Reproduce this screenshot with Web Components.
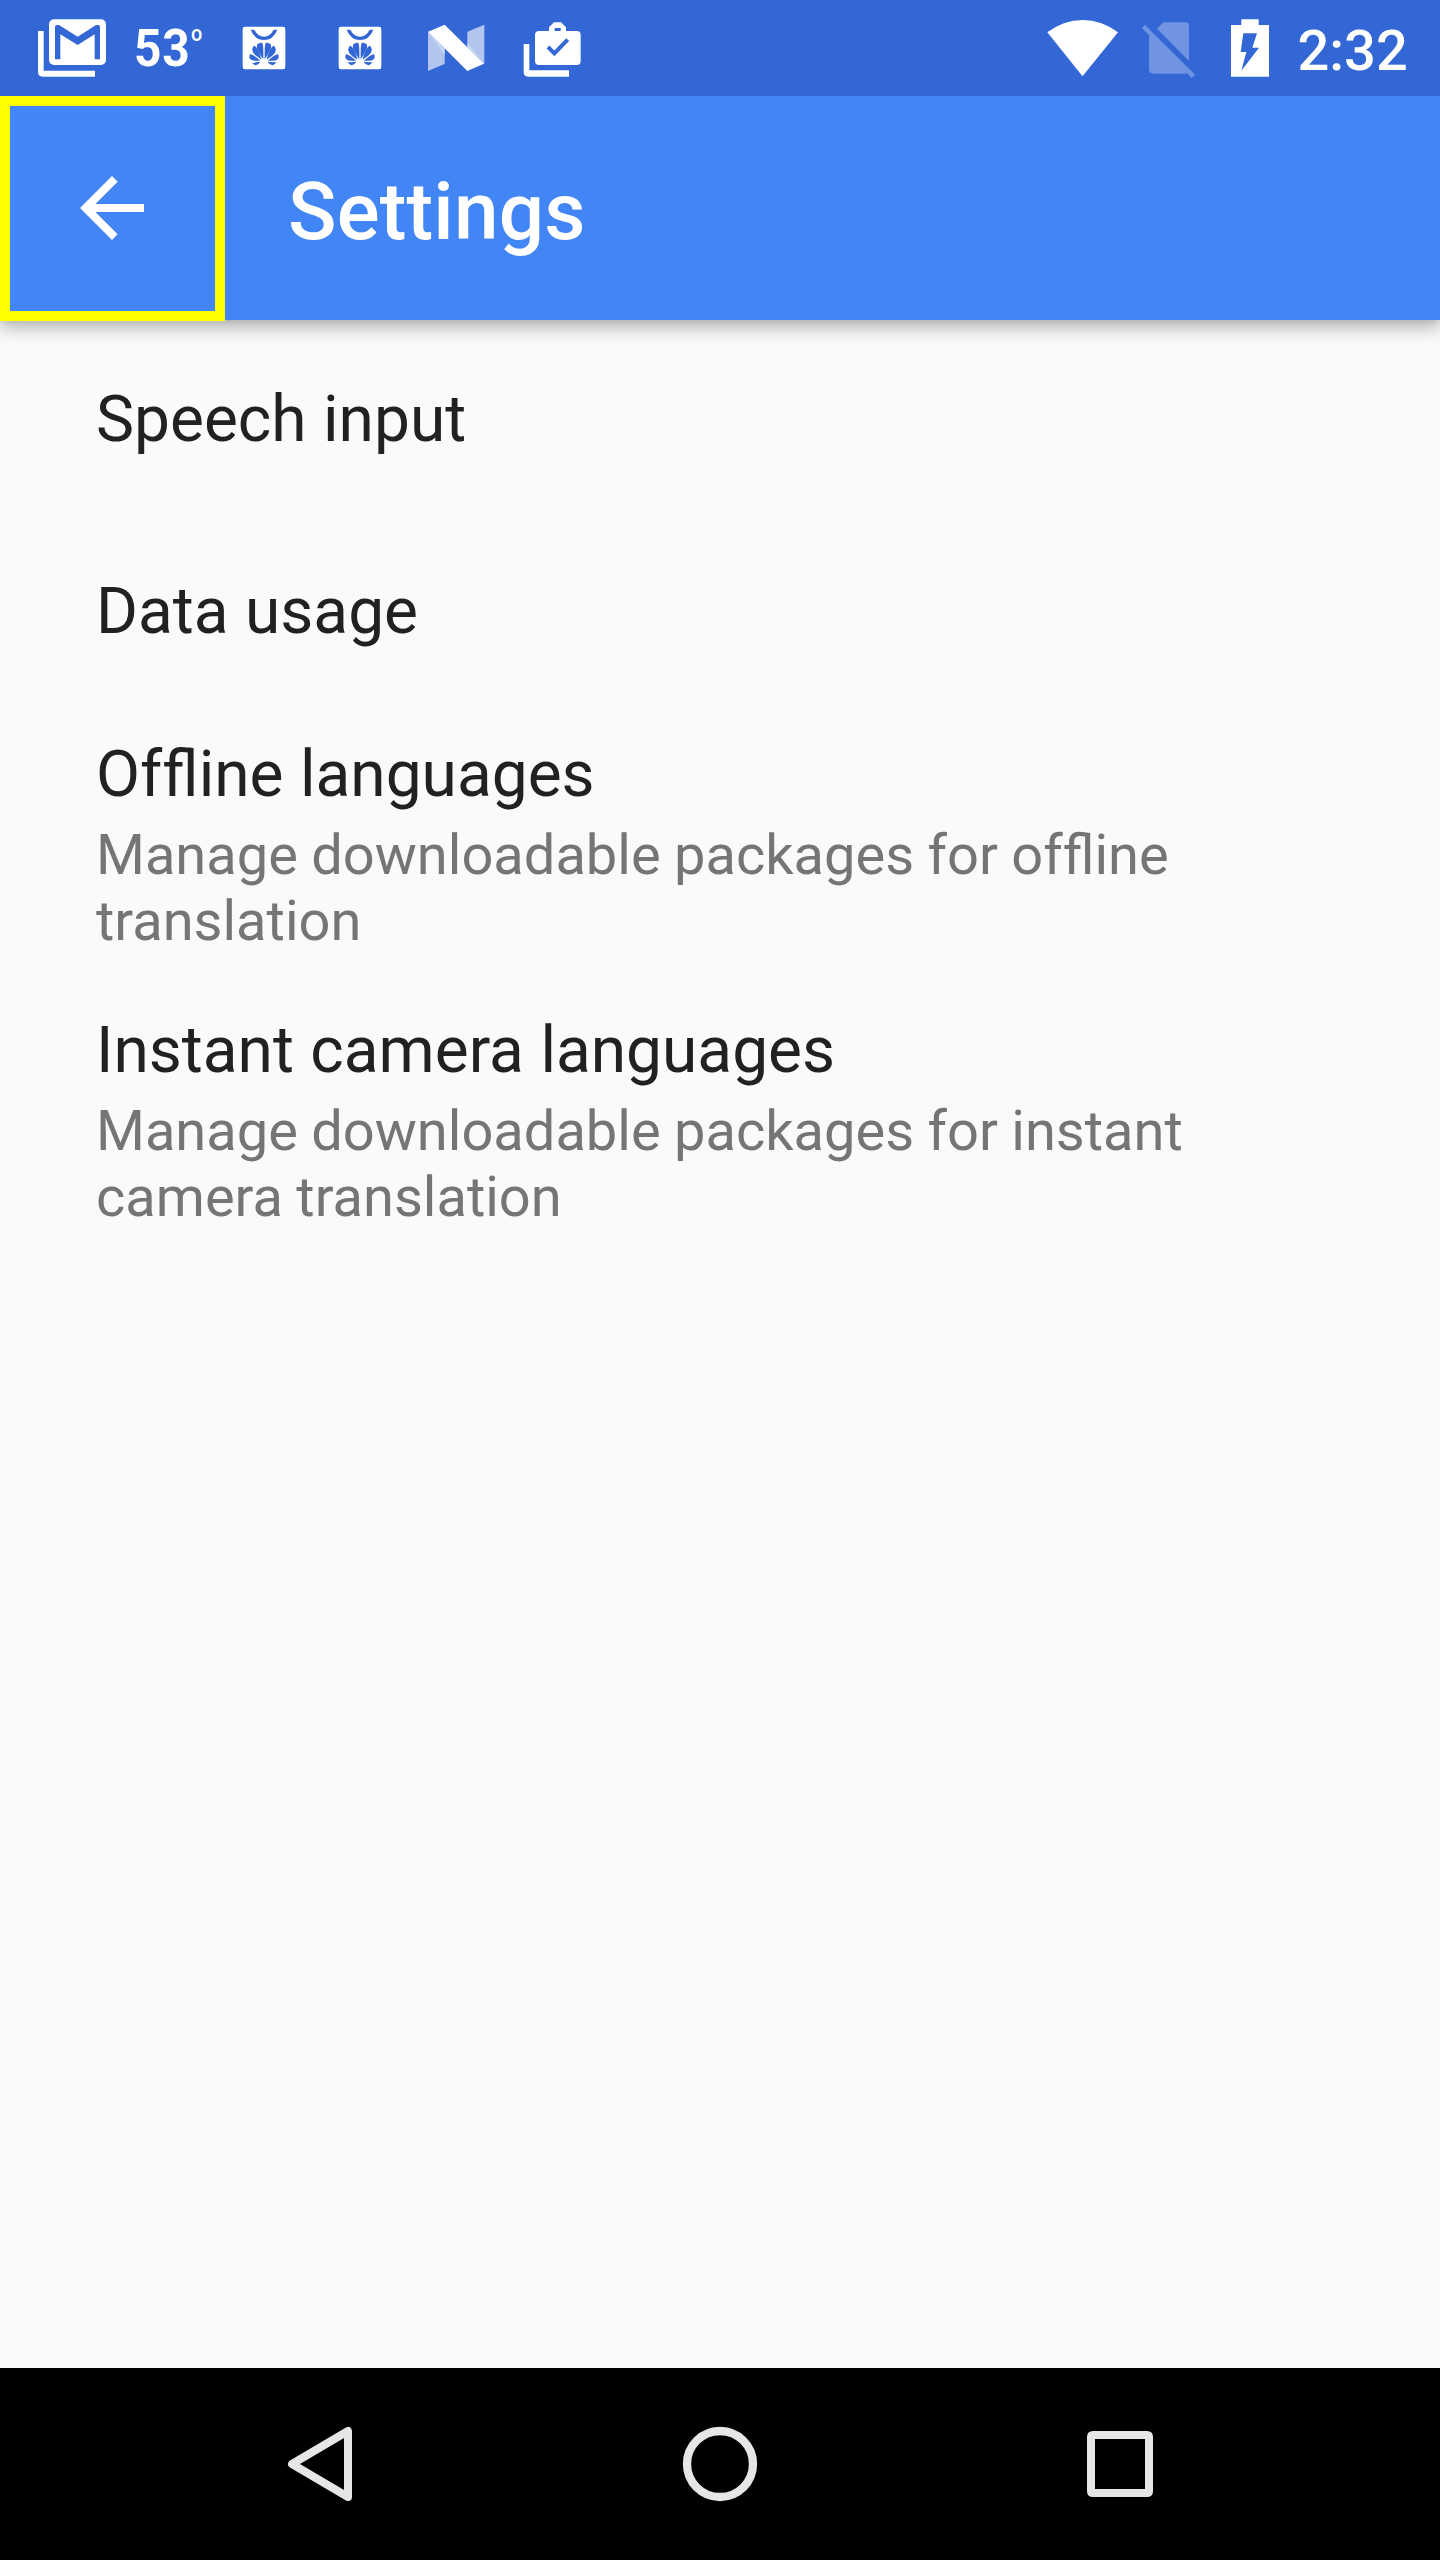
<!DOCTYPE html>
<html lang="en">
<head>
<meta charset="utf-8">
<title>Settings</title>
<style>
  html, body { margin: 0; padding: 0; }
  body { width: 1440px; height: 2560px; overflow: hidden; font-family: Roboto, "Liberation Sans", sans-serif; background: #fafafa; }
</style>
</head>
<body>
<settings-screen></settings-screen>
<script>
const define = (name, markup) => {
  const tpl = document.createElement('template');
  tpl.innerHTML = markup;
  customElements.define(name, class extends HTMLElement {
    constructor() {
      super();
      this.attachShadow({ mode: 'open' }).appendChild(tpl.content.cloneNode(true));
    }
  });
};

/* Status bar glyphs: three drawing units per pixel, full bar height. */
const GLYPHS = {
  mail: [114, 207, `
    <path d="M114 93h17v119h154v18H128q-14 0-14-14z"/>
    <rect x="147" y="58" width="171" height="137" rx="15"/>
    <path fill="#3367d6" d="M165 178V80q0-5 5-5h7l56 35 55-35h7q5 0 5 5v98h-16v-75l-51 32-52-32v75z"/>`],
  shop: [66, 132, `
    <rect x="68" y="80" width="128" height="128" rx="7"/>
    <g fill="#3367d6">
      <path d="M92 89h11q11 21 29 21t29-21h11q-12 31-40 31t-40-31z"/>
      <g>
        <path d="M130 178C118 160 108 146 111 134Q116 127 127 128Q131 135 130 178z"/>
        <path d="M125 179C108 168 95 160 97 146Q98 139 104 137Q113 141 125 179z"/>
        <path d="M121 182C103 183 88 182 88 170Q88 165 91 162Q106 167 121 182z"/>
        <path d="M121 186Q115 195 107 196Q99 195 95 187z"/>
      </g>
      <g transform="matrix(-1 0 0 1 264 0)">
        <path d="M130 178C118 160 108 146 111 134Q116 127 127 128Q131 135 130 178z"/>
        <path d="M125 179C108 168 95 160 97 146Q98 139 104 137Q113 141 125 179z"/>
        <path d="M121 182C103 183 88 182 88 170Q88 165 91 162Q106 167 121 182z"/>
        <path d="M121 186Q115 195 107 196Q99 195 95 187z"/>
      </g>
    </g>`],
  nougat: [51, 174, `
    <path fill="#b3c5ef" d="M54 95l50 51v46l-50 21zM172 95l51-21v118l-51-50z"/>
    <path fill="#c9d6f4" d="M54 95l50 51v18zM223 192l-51-50v-14z"/>
    <path d="M54 95l50-21 118 117-50 22z"/>`],
  work: [339, 177, `
    <path d="M341 132h17v79h119v19H355q-14 0-14-14z"/>
    <path fill-rule="evenodd" d="M417 93V82l15-15h21l15 15v11h32q12 0 12 12v78q0 12-12 12H387q-12 0-12-12v-78q0-12 12-12zM434 84v9h18v-9z"/>
    <path fill="none" stroke="#3367d6" stroke-width="12" d="M414 141l19 19 40-41"/>`],
  wifi: [51, 216, `<path d="M157.500 229L52 97A170 170 0 0 1 264 97z"/>`],
  nosim: [333, 165, `
    <g fill="#7194e2">
      <path d="M381 86l19-19h65q12 0 12 12v104z"/>
      <path d="M336 84l9-9 150 149-10 10-14-14-5 1H371q-14 0-14-14V106z"/>
    </g>`],
  battery: [60, 120, `
    <path fill-rule="evenodd" d="M63 75h31V58h52v17h31v155H63zM100 100l-8 56h17l-15 56 53-69h-20l14-43z"/>`]
};

customElements.define('status-glyph', class extends HTMLElement {
  constructor() {
    super();
    this.attachShadow({ mode: 'open' });
  }
  connectedCallback() {
    const [x, w, art] = GLYPHS[this.getAttribute('name')];
    this.shadowRoot.innerHTML = `
      <style>:host { display: block; flex: none; height: 96px; } svg { display: block; fill: #fff; }</style>
      <svg width="${w / 3}" height="96" viewBox="${x} 0 ${w} 288">${art}</svg>`;
  }
});

define('status-bar', `
  <style>
    :host { display: flex; justify-content: space-between; height: 96px; background: #3367d6; color: #fff; }
    .side { display: flex; align-items: flex-start; }
    .left { padding-left: 38px; }
    .right { width: 393px; }
    .temp { box-sizing: border-box; width: 135px; padding-left: 27px; font-size: 52px; line-height: 60px; font-weight: 700; white-space: nowrap; display: flex; padding-top: 19px; }
    .num { display: block; width: 56px; letter-spacing: 1px; transform: scaleX(.92); transform-origin: 0 0; }
    .deg { font-size: 22px; line-height: 26px; font-weight: 500; margin: 2px 0 0 1px; transform: scaleX(.9); transform-origin: 0 0; }
    .clock { margin-left: 27.500px; font-size: 56px; line-height: 66px; font-weight: 500; padding-top: 18px; }
    .g52 { margin-left: 52px; }
    .g45 { margin-left: 45px; }
    .g38 { margin-left: 38px; }
    .g22 { margin-left: 22px; }
    .g34 { margin-left: 34px; }
  </style>
  <div class="side left">
    <status-glyph name="mail"></status-glyph>
    <div class="temp"><span class="num">53</span><span class="deg">o</span></div>
    <status-glyph name="shop"></status-glyph>
    <status-glyph class="g52" name="shop"></status-glyph>
    <status-glyph class="g45" name="nougat"></status-glyph>
    <status-glyph class="g38" name="work"></status-glyph>
  </div>
  <div class="side right">
    <status-glyph name="wifi"></status-glyph>
    <status-glyph class="g22" name="nosim"></status-glyph>
    <status-glyph class="g34" name="battery"></status-glyph>
    <div class="clock">2:32</div>
  </div>`);

define('app-bar', `
  <style>
    :host { display: flex; height: 224px; background: #4285f4; color: #fff; box-shadow: 0 8px 16px rgba(0,0,0,.28), 0 2px 4px rgba(0,0,0,.06); }
    .back { box-sizing: border-box; flex: none; width: 225px; height: 225px; border: 10px solid #ff0; padding: 54px; background: #4285f4; }
    svg { display: block; }
    .title { margin: 0 0 0 63px; padding-top: 69px; font-size: 80px; line-height: 94px; font-weight: 500; letter-spacing: .2px; }
  </style>
  <div class="back"><svg width="96" height="96" viewBox="0 0 24 24" fill="#fff"><path d="M20 11H7.830l5.590-5.590L12 4l-8 8 8 8 1.410-1.410L7.830 13H20z"/></svg></div>
  <h1 class="title"><slot></slot></h1>`);

define('setting-item', `
  <style>
    :host { box-sizing: border-box; display: flex; flex-direction: column; justify-content: center; min-height: 192px; padding: 29px 96px 30px; }
    .title { font-size: 64px; line-height: 75px; color: #212121; word-spacing: .6px; }
    ::slotted([slot=summary]) { display: block; margin-top: 10px; width: 1120px; font-size: 56px; line-height: 66px; color: #757575; word-spacing: -.5px; }
  </style>
  <div class="title"><slot></slot></div>
  <slot name="summary"></slot>`);

define('nav-bar', `
  <style>
    :host { display: flex; justify-content: center; align-items: center; gap: 320px; height: 192px; background: #000; }
    svg { display: block; width: 80px; height: 80px; fill: none; stroke: #e6e6e6; stroke-width: 8; }
  </style>
  <svg viewBox="280 2424 80 80"><path stroke-linejoin="round" d="M348 2431v66l-56-33z"/></svg>
  <svg viewBox="680 2424 80 80"><circle cx="720" cy="2464" r="33" stroke-width="8.300"/></svg>
  <svg viewBox="1080 2424 80 80"><path fill="#e6e6e6" fill-rule="evenodd" stroke="none" d="M1093 2431h54q6 0 6 6v54q0 6-6 6h-54q-6 0-6-6v-54q0-6 6-6zM1095 2439v50h50v-50z"/></svg>`);

define('settings-screen', `
  <style>
    :host { display: flex; flex-direction: column; width: 1440px; height: 2560px; background: #fafafa; }
    app-bar { z-index: 1; }
    status-bar { z-index: 2; }
    .list { flex: 1; padding-top: 4px; }
    .line { display: block; }
    /* keeps the first f apart, so that only f and l are joined */
    .solo { font-variant-ligatures: none; }
  </style>
  <status-bar></status-bar>
  <app-bar>Settings</app-bar>
  <div class="list">
    <setting-item>Speech input</setting-item>
    <setting-item>Data usage</setting-item>
    <setting-item><span class="solo">Of</span>fline languages<span slot="summary"><span class="line">Manage downloadable packages for <span class="solo">of</span>fline </span><span class="line">translation</span></span></setting-item>
    <setting-item>Instant camera languages<span slot="summary">Manage downloadable packages for instant camera translation</span></setting-item>
  </div>
  <nav-bar></nav-bar>`);
</script>
</body>
</html>
